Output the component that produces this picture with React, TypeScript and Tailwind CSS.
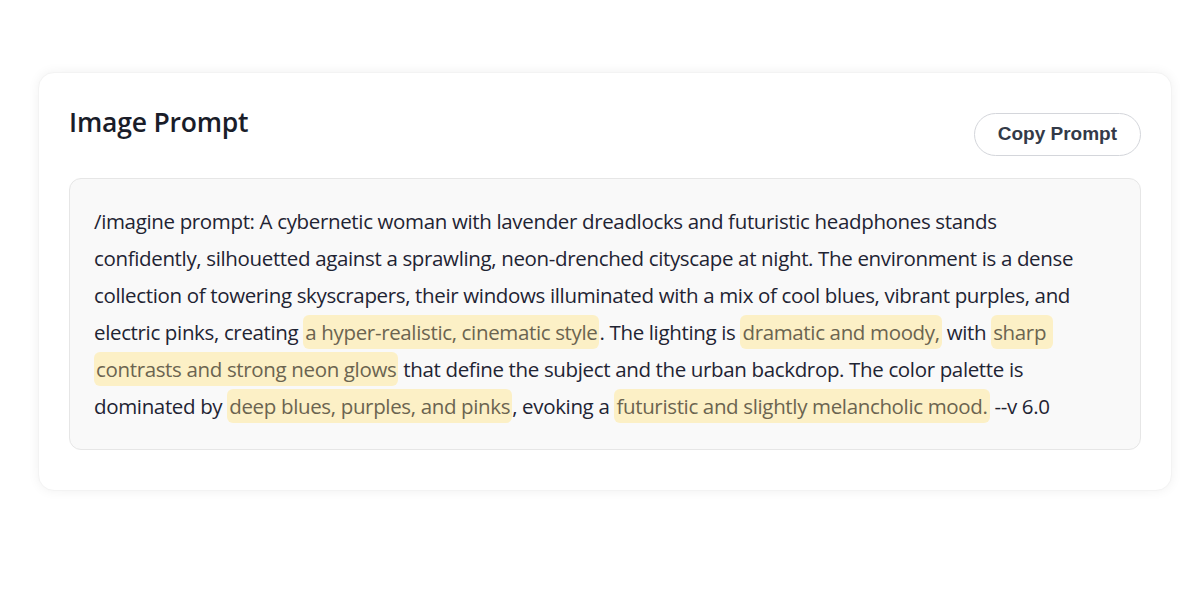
import React from "react";

const hl = "bg-[#fcf0c6] text-[#6b6450] rounded-md px-[2px] py-[3px]";

export default function App() {
  return (
    <div className="min-h-[600px] bg-white pt-[72px] pl-[38px] pr-[28px]">
      <div className="rounded-2xl bg-white shadow-[0_0_12px_rgba(0,0,0,0.06)] border border-[#f3f3f3] px-[30px] pt-[31px] pb-[40px]">
        <div className="flex items-start justify-between">
          <h1 className="mt-[2px] text-[26.5px] leading-8 font-semibold text-[#1a1d29] [font-family:'Open_Sans',sans-serif] tracking-[-0.2px]">
            Image Prompt
          </h1>
          <button className="mt-[9px] h-[43px] rounded-full border border-[#d4d6db] bg-white px-[23px] text-[19px] font-bold text-[#333a48] [font-family:'Liberation_Sans',Arial,sans-serif]">
            Copy Prompt
          </button>
        </div>
        <div className="mt-[22px] rounded-xl border border-[#e6e6e6] bg-[#f9f9f9] px-6 py-6">
          <p className="whitespace-nowrap text-[20.5px] leading-[37px] text-[#1f2433] [font-family:'Open_Sans',sans-serif] tracking-[-0.35px]">
            /imagine prompt: A cybernetic woman with lavender dreadlocks and futuristic headphones stands
            <br />
            confidently, silhouetted against a sprawling, neon-drenched cityscape at night. The environment is a dense
            <br />
            collection of towering skyscrapers, their windows illuminated with a mix of cool blues, vibrant purples, and
            <br />
            electric pinks, creating <span className={hl}>a hyper-realistic, cinematic style</span>. The lighting is{" "}
            <span className={hl}>dramatic and moody,</span> with <span className={hl}>sharp&nbsp;</span>
            <br />
            <span className={hl}>contrasts and strong neon glows</span> that define the subject and the urban backdrop. The color palette is
            <br />
            dominated by <span className={hl}>deep blues, purples, and pinks</span>, evoking a{" "}
            <span className={hl}>futuristic and slightly melancholic mood.</span> --v 6.0
          </p>
        </div>
      </div>
    </div>
  );
}
